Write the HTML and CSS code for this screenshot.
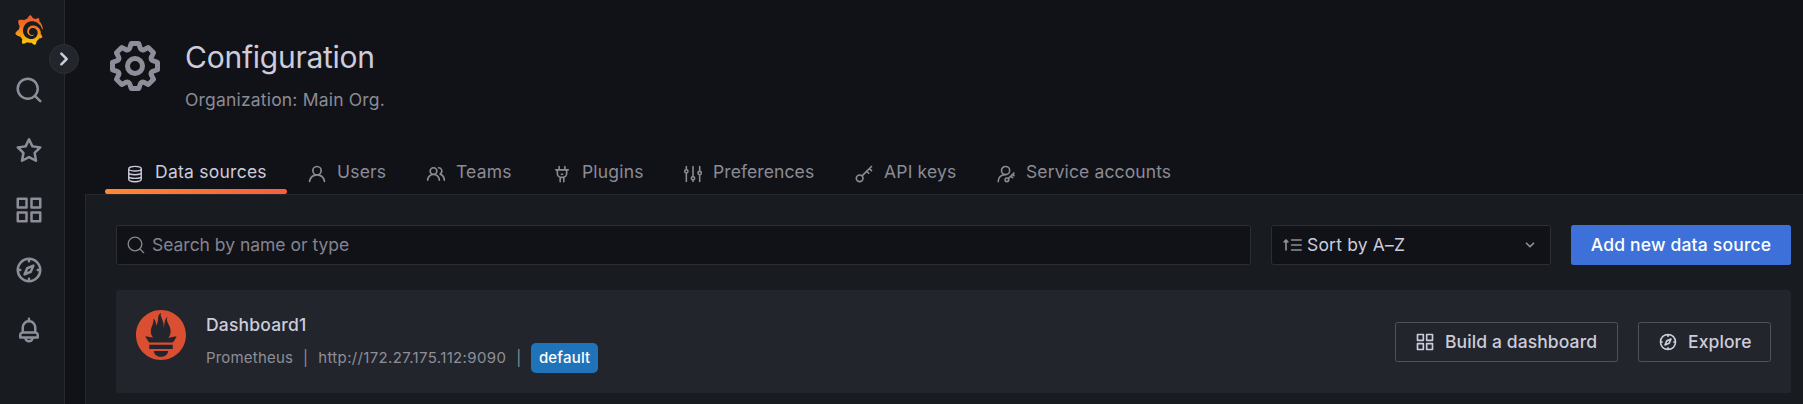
FILE: index.html
```html
<!DOCTYPE html>
<html lang="en">
<head>
<meta charset="utf-8">
<title>Configuration</title>
<link rel="stylesheet" href="styles.css">
</head>
<body>
<svg class="sprite" aria-hidden="true">
  <symbol id="search" viewBox="0 0 24 24"><path d="M21.71,20.29,18,16.61A9,9,0,1,0,16.61,18l3.68,3.68a1,1,0,0,0,1.42,0A1,1,0,0,0,21.71,20.29ZM11,18a7,7,0,1,1,7-7A7,7,0,0,1,11,18Z"/></symbol>
  <symbol id="search-thin" viewBox="0 0 24 24"><g fill="none" stroke="currentColor" stroke-width="1.6" stroke-linecap="round"><circle cx="10.8" cy="10.8" r="8.2"/><path d="M16.8 16.8L21.2 21.2"/></g></symbol>
  <symbol id="star" viewBox="0 0 24 24"><path d="M22,9.67A1,1,0,0,0,21.14,9l-5.69-.83L12.9,3a1,1,0,0,0-1.8,0L8.55,8.16,2.86,9a1,1,0,0,0-.81.68,1,1,0,0,0,.25,1l4.13,4-1,5.68A1,1,0,0,0,6.9,21.44L12,18.77l5.1,2.67a.93.93,0,0,0,.46.12,1,1,0,0,0,.59-.19,1,1,0,0,0,.4-1l-1-5.68,4.13-4A1,1,0,0,0,22,9.67Zm-6.15,4a1,1,0,0,0-.29.88l.72,4.2-3.76-2a1.06,1.06,0,0,0-.94,0l-3.76,2,.72-4.2a1,1,0,0,0-.29-.88l-3-3,4.21-.61a1,1,0,0,0,.76-.55L12,5.7l1.88,3.82a1,1,0,0,0,.76.55l4.21.61Z"/></symbol>
  <symbol id="apps" viewBox="0 0 24 24"><path d="M10,13H3a1,1,0,0,0-1,1v7a1,1,0,0,0,1,1h7a1,1,0,0,0,1-1V14A1,1,0,0,0,10,13ZM9,20H4V15H9ZM21,2H14a1,1,0,0,0-1,1v7a1,1,0,0,0,1,1h7a1,1,0,0,0,1-1V3A1,1,0,0,0,21,2ZM20,9H15V4h5Zm1,4H14a1,1,0,0,0-1,1v7a1,1,0,0,0,1,1h7a1,1,0,0,0,1-1V14A1,1,0,0,0,21,13Zm-1,7H15V15h5ZM10,2H3A1,1,0,0,0,2,3v7a1,1,0,0,0,1,1h7a1,1,0,0,0,1-1V3A1,1,0,0,0,10,2ZM9,9H4V4H9Z"/></symbol>
  <symbol id="compass" viewBox="0 0 24 24"><path d="M12,2A10,10,0,1,0,22,12,10,10,0,0,0,12,2Zm1,17.93V19a1,1,0,0,0-2,0v.93A8,8,0,0,1,4.07,13H5a1,1,0,0,0,0-2H4.07A8,8,0,0,1,11,4.07V5a1,1,0,0,0,2,0V4.07A8,8,0,0,1,19.93,11H19a1,1,0,0,0,0,2h.93A8,8,0,0,1,13,19.93ZM15.14,7.55l-5,2.12a1,1,0,0,0-.52.52l-2.12,5a1,1,0,0,0,.21,1.1,1,1,0,0,0,.7.29.93.93,0,0,0,.4-.09l5-2.12a1,1,0,0,0,.52-.52l2.12-5a1,1,0,0,0-1.31-1.3Zm-2.49,5.1-2.28,1,1-2.28,2.28-1Z"/></symbol>
  <symbol id="bell" viewBox="0 0 24 24"><path d="M18,13.18V10a6,6,0,0,0-5-5.91V3a1,1,0,0,0-2,0V4.09A6,6,0,0,0,6,10v3.18A3,3,0,0,0,4,16v2a1,1,0,0,0,1,1H8.14a4,4,0,0,0,7.72,0H19a1,1,0,0,0,1-1V16A3,3,0,0,0,18,13.18ZM8,10a4,4,0,0,1,8,0v3H8Zm4,10a2,2,0,0,1-1.72-1h3.44A2,2,0,0,1,12,20Zm6-3H6V16a1,1,0,0,1,1-1H17a1,1,0,0,1,1,1Z"/></symbol>
  <symbol id="angle-right" viewBox="0 0 24 24"><path d="M14.83,11.29,10.59,7.05a1,1,0,0,0-1.42,0,1,1,0,0,0,0,1.41L12.71,12,9.17,15.54a1,1,0,0,0,0,1.41,1,1,0,0,0,.71.29,1,1,0,0,0,.71-.29l4.24-4.24A1,1,0,0,0,14.83,11.29Z"/></symbol>
  <symbol id="angle-down" viewBox="0 0 24 24"><path d="M17,9.17a1,1,0,0,0-1.41,0L12,12.71,8.46,9.17a1,1,0,0,0-1.41,0,1,1,0,0,0,0,1.42l4.24,4.24a1,1,0,0,0,1.42,0L17,10.59A1,1,0,0,0,17,9.17Z"/></symbol>
  <symbol id="gear" viewBox="0 0 24 24"><path d="M21.32,9.55l-1.89-.63.89-1.78A1,1,0,0,0,20.13,6L18,3.87a1,1,0,0,0-1.15-.19l-1.78.89-.63-1.89A1,1,0,0,0,13.5,2h-3a1,1,0,0,0-.95.68L8.92,4.57,7.14,3.68A1,1,0,0,0,6,3.87L3.87,6a1,1,0,0,0-.19,1.15l.89,1.78-1.89.63A1,1,0,0,0,2,10.5v3a1,1,0,0,0,.68.95l1.89.63-.89,1.78A1,1,0,0,0,3.87,18L6,20.13a1,1,0,0,0,1.15.19l1.78-.89.63,1.89a1,1,0,0,0,.95.68h3a1,1,0,0,0,.95-.68l.63-1.89,1.78.89A1,1,0,0,0,18,20.13L20.13,18a1,1,0,0,0,.19-1.15l-.89-1.78,1.89-.63A1,1,0,0,0,22,13.5v-3A1,1,0,0,0,21.32,9.55ZM20,12.78l-1.2.4A2,2,0,0,0,17.64,16l.57,1.14-1.1,1.1L16,17.64a2,2,0,0,0-2.79,1.16l-.4,1.2H11.22l-.4-1.2A2,2,0,0,0,8,17.64l-1.14.57-1.1-1.1L6.36,16A2,2,0,0,0,5.2,13.18L4,12.78V11.22l1.2-.4A2,2,0,0,0,6.36,8L5.79,6.89l1.1-1.1L8,6.36A2,2,0,0,0,10.82,5.2l.4-1.2h1.56l.4,1.2A2,2,0,0,0,16,6.36l1.14-.57,1.1,1.1L17.64,8a2,2,0,0,0,1.16,2.79l1.2.4ZM12,8a4,4,0,1,0,4,4A4,4,0,0,0,12,8Zm0,6a2,2,0,1,1,2-2A2,2,0,0,1,12,14Z"/></symbol>
  <symbol id="user" viewBox="0 0 24 24"><path d="M15.71,12.71a6,6,0,1,0-7.42,0,10,10,0,0,0-6.22,8.18,1,1,0,0,0,2,.22,8,8,0,0,1,15.9,0,1,1,0,0,0,1,.89h.11a1,1,0,0,0,.88-1.1A10,10,0,0,0,15.71,12.71ZM12,12a4,4,0,1,1,4-4A4,4,0,0,1,12,12Z"/></symbol>
  <symbol id="users" viewBox="0 0 24 24"><path d="M12.3,12.22A4.92,4.92,0,0,0,14,8.5a5,5,0,0,0-10,0,4.92,4.92,0,0,0,1.7,3.72A8,8,0,0,0,1,19.5a1,1,0,0,0,2,0,6,6,0,0,1,12,0,1,1,0,0,0,2,0A8,8,0,0,0,12.3,12.22ZM9,11.5a3,3,0,1,1,3-3A3,3,0,0,1,9,11.5Zm9.74.32A5,5,0,0,0,15,3.5a1,1,0,0,0,0,2,3,3,0,0,1,3,3,3,3,0,0,1-1.5,2.59,1,1,0,0,0-.5.84,1,1,0,0,0,.45.86l.39.26.13.07a7,7,0,0,1,4,6.38,1,1,0,0,0,2,0A9,9,0,0,0,18.74,11.82Z"/></symbol>
  <symbol id="database" viewBox="0 0 24 24"><g fill="none" stroke="currentColor" stroke-width="1.7"><path d="M4.500 5.600C4.500 4 8 2.800 12 2.800S19.500 4 19.500 5.600S16 8.400 12 8.400S4.500 7.200 4.500 5.600ZM4.500 5.600V18.400C4.500 20 8 21.300 12 21.300S19.500 20 19.500 18.400V5.600M4.500 10.200C4.500 11.700 8 12.800 12 12.800S19.500 11.700 19.500 10.200M4.500 14.600C4.500 16.100 8 17.200 12 17.200S19.500 16.100 19.500 14.600"/></g></symbol>
  <symbol id="plug" viewBox="0 0 24 24"><g fill="none" stroke="currentColor" stroke-width="1.9" stroke-linecap="round"><path d="M4.500 7H19.500M8.500 3V7M15.500 3V7M6.400 7V11.500A4.500 4.500 0 0 0 10.900 16H13.100A4.500 4.500 0 0 0 17.600 11.500V7M9.800 16V21.300M14.200 16V21.300M11.300 12.200H12.700"/></g></symbol>
  <symbol id="sliders" viewBox="0 0 24 24"><g fill="none" stroke="currentColor" stroke-width="1.9" stroke-linecap="round"><path d="M4 3V6.500M4 11V21M12 3V15M12 19.500V21M20 3V8.500M20 13V21"/><circle cx="4" cy="8.800" r="2"/><circle cx="12" cy="17.200" r="2"/><circle cx="20" cy="10.800" r="2"/></g></symbol>
  <symbol id="key" viewBox="0 0 24 24"><g fill="none" stroke="currentColor" stroke-width="2" stroke-linecap="round" stroke-linejoin="round"><circle cx="6.800" cy="17.200" r="4"/><path d="M9.700 14.300L21 3M15.300 8.700L17.700 11.100M18.500 5.500L21 8"/></g></symbol>
  <symbol id="user-key" viewBox="0 0 24 24"><g fill="none" stroke="currentColor" stroke-width="1.900" stroke-linecap="round" stroke-linejoin="round"><circle cx="11.500" cy="7.800" r="4.900"/><path d="M2.600 21.200C2.900 16.400 6 13.100 10.700 12.900M14.700 17.500L21.500 10.900M18 14.500L20 16.500M20 12.300L21.600 13.900"/><circle cx="13.100" cy="18.900" r="2.200"/></g></symbol>
  <symbol id="sort" viewBox="0 0 24 24"><g fill="none" stroke="currentColor" stroke-width="2" stroke-linecap="round" stroke-linejoin="round"><path d="M4.800 18V6.500M2.600 8.200L4.800 6L7 8.200M11.500 6H23M11.500 12H23M11.500 18H23"/></g></symbol>
</svg>
<div class="app">
  <nav class="sidebar">
    <svg class="logo" viewBox="0 0 351 365"><defs><linearGradient id="flame" gradientUnits="userSpaceOnUse" x1="175" y1="20" x2="175" y2="350"><stop offset="0" stop-color="#f05a28"/><stop offset=".35" stop-color="#f37026"/><stop offset="1" stop-color="#fbca0a"/></linearGradient></defs><path fill="url(#flame)" d="M342,161.2c-0.6-6.1-1.6-13.1-3.6-20.9c-2-7.7-5-16.2-9.4-25c-4.4-8.8-10.1-17.9-17.5-26.8c-2.9-3.5-6.1-6.9-9.5-10.2c5.1-20.3-6.2-37.9-6.2-37.9c-19.5-1.2-31.9,6.1-36.5,9.4c-0.8-0.3-1.5-0.7-2.3-1c-3.3-1.3-6.7-2.6-10.3-3.7c-3.5-1.1-7.1-2.1-10.8-3c-3.7-0.9-7.4-1.6-11.2-2.2c-0.7-0.1-1.3-0.2-2-0.3c-8.5-27.2-32.9-38.6-32.9-38.6c-27.3,17.3-32.4,41.5-32.4,41.5s-0.1,0.5-0.3,1.4c-1.5,0.4-3,0.9-4.5,1.3c-2.1,0.6-4.2,1.4-6.2,2.2c-2.1,0.8-4.1,1.6-6.2,2.5c-4.1,1.8-8.2,3.8-12.2,6c-3.9,2.2-7.7,4.6-11.4,7.1c-0.5-0.2-1-0.4-1-0.4c-37.8-14.4-71.3,2.9-71.3,2.9c-3.1,40.2,15.1,65.5,18.7,70.1c-0.9,2.500-1.7,5-2.5,7.5c-2.8,9.1-4.9,18.4-6.2,28.1c-0.2,1.4-0.4,2.8-0.5,4.2C18.8,192.7,8.5,228,8.5,228c29.1,33.5,63.1,35.6,63.1,35.6c0,0,0.1-0.1,0.1-0.1c4.3,7.7,9.3,15,14.9,21.9c2.4,2.9,4.8,5.6,7.4,8.3c-10.6,30.4,1.5,55.6,1.5,55.6c32.4,1.2,53.7-14.2,58.2-17.7c3.2,1.1,6.5,2.1,9.8,2.9c10,2.6,20.2,4.1,30.4,4.5c2.5,0.1,5.1,0.2,7.6,0.1l1.2,0l0.8,0l1.6,0l1.6-0.1l0,0.1c15.3,21.8,42.1,24.9,42.1,24.9c19.1-20.1,20.2-40.1,20.2-44.4l0,0c0,0,0-0.1,0-0.3c0-0.4,0-0.6,0-0.6l0,0c0-0.3,0-0.6,0-0.9c4-2.8,7.8-5.8,11.4-9.1c7.6-6.9,14.3-14.8,19.9-23.3c0.5-0.8,1-1.6,1.5-2.4c21.6,1.2,36.9-13.4,36.9-13.4c-3.6-22.5-16.4-33.5-19.1-35.6c-0.1-0.1-0.3-0.2-1-0.7c0.1-1.4,0.2-2.7,0.3-4.1c0.2-2.4,0.2-4.9,0.2-7.3l0-1.8l0-0.9l0-1.1l-0.1-1.5l-0.1-2c0-0.7-0.1-1.3-0.2-1.9c-0.1-0.6-0.1-1.3-0.2-1.9l-0.2-1.9l-0.3-1.9c-0.4-2.5-0.8-4.9-1.4-7.4c-2.3-9.7-6.1-18.9-11-27.2c-5-8.3-11.2-15.6-18.3-21.8c-7-6.2-14.9-11.2-23.1-14.9c-8.3-3.7-16.9-6.1-25.5-7.2c-4.3-0.6-8.6-0.8-12.9-0.7l-1.6,0l-0.9,0l-0.7,0l-1.6,0.1c-0.6,0-1.2,0.1-1.7,0.1c-2.2,0.2-4.4,0.5-6.5,0.9c-8.6,1.6-16.7,4.7-23.8,9c-7.1,4.3-13.3,9.6-18.3,15.6c-5,6-8.9,12.7-11.6,19.6c-2.7,6.9-4.2,14.1-4.6,21c-0.1,1.7-0.1,3.5-0.1,5.2c0,0.4,0,0.9,0,1.3l0.1,1.4c0.1,0.8,0.1,1.7,0.2,2.5c0.3,3.5,1,6.9,1.9,10.1c1.9,6.5,4.9,12.4,8.6,17.4c3.7,5,8.2,9.1,12.9,12.4c4.7,3.2,9.8,5.5,14.8,7c5,1.5,10,2.1,14.7,2.1c1.200,0,2.500,0,3.500-0.1c0.5,0,1-0.1,1.5-0.1c1,0,2.500-0.3,3.500-0.6c0.6-0.1,1.1-0.2,1.6-0.4c1.1-0.2,2.1-0.6,3.1-0.9c2-0.7,4-1.5,5.7-2.4c1.8-0.9,3.4-2,5-3c0.4-0.3,0.9-0.6,1.3-1c1.6-1.3,1.9-3.7,0.6-5.3c-1.1-1.4-3.1-1.8-4.7-0.9c-0.4,0.2-0.8,0.4-1.2,0.6c-1.4,0.7-2.8,1.3-4.3,1.8c-1.5,0.5-3.1,0.9-4.7,1.2c-0.8,0.1-1.6,0.2-2.5,0.3c-2,0.200-5,0.100-7.500-0.200c-3.7-0.5-7.4-1.6-10.9-3.2c-3.6-1.6-7-3.8-10.1-6.6c-3.1-2.8-5.8-6.1-7.9-9.9c-2.1-3.8-3.6-8-4.3-12.4c-0.3-2.2-0.5-4.5-0.4-6.7c0-1.8,0.300-4.300,0.700-7.100c1.7-9.6,6.5-19,13.9-26.1c1.9-1.8,3.9-3.4,6-4.9c2.1-1.5,4.4-2.8,6.8-3.9c2.4-1.1,4.8-2,7.4-2.7c2.5-0.7,5.1-1.1,7.8-1.4c1.3-0.1,2.6-0.2,4-0.2c1.500,0,3,0,4.200,0.100c2.9,0.2,5.7,0.6,8.5,1.3c5.6,1.2,11.1,3.3,16.2,6.1c10.2,5.7,18.9,14.5,24.2,25.1c2.7,5.3,4.6,11,5.5,16.9c0.2,1.5,0.4,3,0.5,4.5c0.300,3,0.300,6,0.100,9.200c-0.1,1.6-0.3,3.3-0.5,4.9c-0.2,1.6-0.5,3.2-0.8,4.8c-0.3,1.6-0.7,3.2-1.1,4.7c-0.8,3.1-1.8,6.2-3,9.3c-2.4,6-5.6,11.8-9.4,17.1c-7.7,10.6-18.2,19.2-30.2,24.7c-6,2.7-12.3,4.7-18.8,5.7c-3.2,0.6-6.5,0.9-9.8,1c-3.500,0.100-7,0-10.300-0.300c-7-0.5-13.9-1.8-20.7-3.7c-6.7-1.9-13.2-4.6-19.4-7.8c-12.3-6.6-23.4-15.6-32-26.5c-4.3-5.4-8.1-11.3-11.2-17.4c-3.1-6.1-5.6-12.6-7.4-19.1c-1.8-6.6-2.9-13.3-3.4-20.1c-0.400-6-0.300-13,0.600-20.400c0.4-3.4,1-6.9,1.7-10.3c0.7-3.4,1.5-6.8,2.5-10.2c1.9-6.7,4.3-13.2,7.1-19.3c5.7-12.2,13.1-23.1,22-31.8c2.2-2.2,4.5-4.2,6.9-6.2c2.4-1.9,4.9-3.7,7.5-5.4c2.5-1.7,5.2-3.2,7.9-4.6c1.3-0.7,2.7-1.4,4.1-2c4-1.800,8-3.500,12.900-4.900c3-0.900,6-1.700,8.900-2.300c3-0.700,6-1.300,9.200-1.800c5-0.700,9-1.100,14.500-1.500c3-0.200,7-0.200,10.500-0.100c5.8,0.2,11.5,0.9,17,1.9c11.1,2.1,21.5,5.6,31,10.3c9.5,4.6,17.9,10.3,25.3,16.5c3.500,3,7,6.200,10.200,9.700c3.1,3.3,6,6.6,8.6,10c5.2,6.7,9.4,13.5,12.7,19.9c3,6,5,11,7.600,18.200c1.5,4.4,2.6,8.3,3.5,11.7c0.3,1.4,1.6,2.3,3,2.1c1.5-0.1,2.6-1.3,2.6-2.8C342.6,170.4,342.5,166.1,342,161.2z"/></svg>
    <svg class="nav-icon"><use href="#search"/></svg>
    <svg class="nav-icon"><use href="#star"/></svg>
    <svg class="nav-icon"><use href="#apps"/></svg>
    <svg class="nav-icon"><use href="#compass"/></svg>
    <svg class="nav-icon"><use href="#bell"/></svg>
    <button class="toggle" aria-label="Expand menu"><svg class="toggle-icon"><use href="#angle-right"/></svg></button>
  </nav>
  <main class="main">
    <header class="header">
      <svg class="gear"><use href="#gear"/></svg>
      <div class="heading">
        <h1 class="title">Configuration</h1>
        <div class="subtitle">Organization: Main Org.</div>
      </div>
    </header>
    <div class="tabs">
      <a class="tab tab-sources active"><svg class="icon"><use href="#database"/></svg>Data sources</a>
      <a class="tab tab-users"><svg class="icon"><use href="#user"/></svg>Users</a>
      <a class="tab tab-teams"><svg class="icon"><use href="#users"/></svg>Teams</a>
      <a class="tab tab-plugins"><svg class="icon"><use href="#plug"/></svg>Plugins</a>
      <a class="tab tab-preferences"><svg class="icon"><use href="#sliders"/></svg>Preferences</a>
      <a class="tab tab-keys"><svg class="icon"><use href="#key"/></svg>API keys</a>
      <a class="tab tab-accounts"><svg class="icon"><use href="#user-key"/></svg>Service accounts</a>
    </div>
    <section class="panel">
      <div class="toolbar">
        <div class="field search"><svg class="icon"><use href="#search-thin"/></svg><span>Search by name or type</span></div>
        <div class="field sort"><svg class="icon muted"><use href="#sort"/></svg><span class="sort-label">Sort by A–Z</span><svg class="icon muted"><use href="#angle-down"/></svg></div>
        <button class="primary">Add new data source</button>
      </div>
      <article class="card">
        <svg class="prometheus" viewBox="0 0 24 24"><path d="M12 0C5.373 0 0 5.372 0 12c0 6.627 5.373 12 12 12s12-5.373 12-12c0-6.628-5.373-12-12-12zm0 22.46c-1.885 0-3.414-1.26-3.414-2.814h6.828c0 1.553-1.528 2.813-3.414 2.813zm5.64-3.745H6.36v-2.046h11.28v2.046zm-.04-3.098H6.391c-.037-.043-.075-.086-.111-.13-1.155-1.401-1.427-2.133-1.69-2.879-.005-.025 1.4.287 2.395.511 0 0 .513.119 1.262.255-.72-.843-1.147-1.915-1.147-3.01 0-2.406 1.845-4.508 1.18-6.207.648.053 1.34 1.367 1.387 3.422.689-.951.977-2.69.977-3.755 0-1.103.727-2.385 1.454-2.429-.648 1.069.168 1.984.894 4.256.272.854.237 2.29.447 3.201.07-1.892.395-4.652 1.595-5.605-.529 1.2.079 2.702.494 3.424.671 1.164 1.078 2.047 1.078 3.716a4.642 4.642 0 0 1-1.11 2.996c.792-.149 1.34-.283 1.34-.283l2.573-.502s-.374 1.538-1.81 3.019z"/></svg>
        <div class="details">
          <h2 class="name">Dashboard1</h2>
          <div class="meta"><span>Prometheus</span><span class="bar">|</span><span class="url">http://172.27.175.112:9090</span><span class="bar">|</span><span class="badge">default</span></div>
        </div>
        <div class="actions">
          <button class="secondary build"><svg class="icon"><use href="#apps"/></svg>Build a dashboard</button>
          <button class="secondary explore"><svg class="icon"><use href="#compass"/></svg>Explore</button>
        </div>
      </article>
    </section>
  </main>
</div>
</body>
</html>
```
FILE: styles.css
```css
* { box-sizing: border-box; }
body {
  margin: 0;
  background: #111217;
  color: #ccccdc;
  font-family: Inter, "Liberation Sans", sans-serif;
  font-size: 17.5px;
  line-height: 27.5px;
  letter-spacing: 0.1875px;
  overflow: hidden;
}
svg { fill: currentColor; flex: none; }
button { font: inherit; letter-spacing: inherit; margin: 0; }
.sprite { display: none; }
.app { display: flex; height: 404px; }

.sidebar {
  position: relative;
  flex: none;
  width: 65px;
  padding: 15px 0 0 14px;
  display: flex;
  flex-direction: column;
  gap: 30px;
  background: #181b1f;
  border-right: 1px solid #26282d;
  color: #8e8e9a;
}
.logo { width: 30px; height: 30px; }
.nav-icon { width: 30px; height: 30px; }
.toggle {
  position: absolute;
  left: 49px;
  top: 44px;
  width: 30px;
  height: 30px;
  padding: 0;
  display: flex;
  align-items: center;
  justify-content: center;
  border: 1px solid #2d3036;
  border-radius: 50%;
  background: #22252b;
  color: #ccccdc;
}
.toggle-icon { width: 30px; height: 30px; }

.main {
  flex: 1;
  min-width: 0;
  display: flex;
  flex-direction: column;
  padding-left: 20px;
}
.header {
  display: flex;
  gap: 20px;
  height: 149px;
  padding: 36px 0 0 20px;
}
.gear { width: 60px; height: 60px; color: #8e8e9a; }
.title {
  margin: 1px 0 0;
  font-size: 30px;
  font-weight: 400;
  line-height: 40px;
  letter-spacing: -0.25px;
}
.subtitle { margin-top: 9px; color: #8b8b96; }

.tabs {
  display: flex;
  height: 45px;
  padding-left: 20px;
  color: #8b8b96;
}
.tab {
  position: relative;
  flex: none;
  display: flex;
  gap: 10px;
  padding: 9px 0 0 20px;
  white-space: nowrap;
}
.tab-sources { width: 182px; letter-spacing: 0.25px; }
.tab-users { width: 119px; }
.tab-teams { width: 126px; }
.tab-plugins { width: 131px; }
.tab-preferences { width: 171px; letter-spacing: 0.1px; }
.tab-keys { width: 142px; }
.tab-accounts { width: 195px; letter-spacing: 0.12px; }
.icon { width: 20px; height: 20px; }
.tab .icon { margin-top: 6px; }
.tab.active { color: #ccccdc; }
.tab.active::after {
  content: "";
  position: absolute;
  left: 0;
  right: 0;
  bottom: 0;
  height: 5px;
  border-radius: 2.5px;
  background: linear-gradient(90deg, #ff8833 0%, #f55f3e 100%);
}

.panel {
  flex: 1;
  padding: 30px 12px 0 30px;
  background: #181b1f;
  border: solid #26282d;
  border-width: 1px 0 0 1px;
}
.toolbar { display: flex; gap: 20px; margin-bottom: 25px; }
.field {
  display: flex;
  align-items: center;
  height: 40px;
  background: #111217;
  border: 1px solid #2d2e34;
  border-radius: 2.5px;
}
.search { flex: 1; gap: 6px; padding-left: 9px; color: #84848f; letter-spacing: -0.02px; }
.sort { width: 280px; gap: 5px; padding: 0 10px; }
.sort-label { flex: 1; }
.muted { color: #8e8e9a; }
.primary {
  width: 220px;
  height: 40px;
  padding: 0;
  border: 0;
  border-radius: 2.5px;
  background: #3d71d9;
  color: #fff;
  font-weight: 500;
}

.card {
  display: flex;
  height: 103px;
  padding: 20px;
  background: #22252b;
  border-radius: 2.5px;
}
.prometheus { width: 50px; height: 50px; fill: #da4e31; }
.details { flex: 1; margin-left: 20px; }
.name { margin: 0; font-size: 17.5px; font-weight: 500; line-height: 30px; }
.meta {
  display: flex;
  align-items: center;
  height: 30px;
  margin-top: 3px;
  color: #8e8e99;
  font-size: 15px;
}
.url { letter-spacing: 0.35px; }
.bar { margin: 0 10px; }
.badge {
  height: 30px;
  padding: 0 7.5px;
  border-radius: 5px;
  background: #1f73b9;
  color: #fff;
  font-weight: 500;
  line-height: 30px;
}
.actions { display: flex; gap: 20px; padding-top: 12px; }
.secondary {
  display: flex;
  align-items: center;
  gap: 10px;
  height: 40px;
  padding: 0 0 0 19px;
  border: 1px solid #50525a;
  border-radius: 2.5px;
  background: transparent;
  color: #ccccdc;
  font-weight: 500;
  letter-spacing: 0.1px;
  white-space: nowrap;
}
.build { width: 223px; }
.explore { width: 133px; }
```
